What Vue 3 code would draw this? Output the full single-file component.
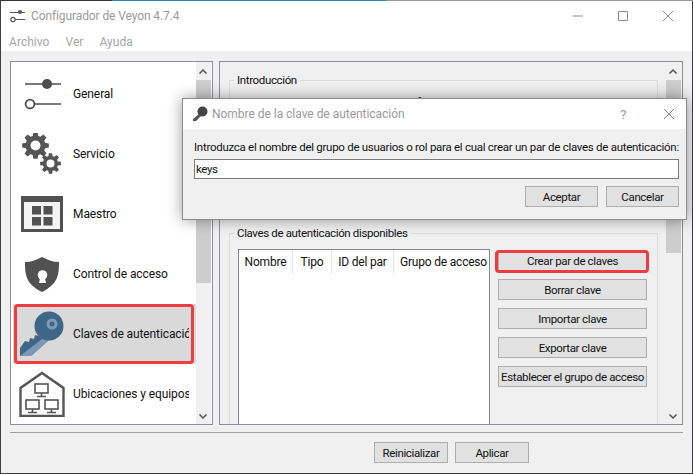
<template>
  <div class="screen">
    <div class="desktop-strip">
      <span class="strip-dark"></span>
      <span class="strip-blue"></span>
      <span class="strip-grey"></span>
    </div>
    <div class="window">
      <header class="titlebar">
        <svg class="app-icon" viewBox="0 0 16 14">
          <path d="M0 3.5h15M5 10.5h10" stroke="#555" stroke-width="1.2" fill="none" />
          <circle cx="10" cy="3" r="2" fill="#555" />
          <circle cx="3" cy="10.5" r="2.2" fill="#fff" stroke="#555" stroke-width="1.2" />
        </svg>
        <span class="title-text">Configurador de Veyon 4.7.4</span>
        <div class="win-controls">
          <svg viewBox="0 0 10 10"><path d="M0 5h10" /></svg>
          <svg viewBox="0 0 10 10"><path d="M.5.5h9v9h-9z" /></svg>
          <svg viewBox="0 0 10 10"><path d="M0 0l10 10M10 0L0 10" /></svg>
        </div>
      </header>
      <nav class="menubar">
        <span v-for="m in menus" :key="m">{{ m }}</span>
      </nav>

      <main class="content">
        <aside class="side-panel">
          <ul class="page-list">
            <li v-for="p in pages" :key="p.name" class="page-row" :class="{ active: p.active }">
              <div class="page-icon">
                <svg v-if="p.icon === 'general'" viewBox="0 0 42 42" width="42" height="42">
                  <path d="M4 11h36M13 31h27" stroke="#4d4d4d" stroke-width="1.6" fill="none" />
                  <circle cx="26" cy="11" r="5" fill="#4d4d4d" />
                  <circle cx="9" cy="31" r="4.4" fill="#fff" stroke="#4d4d4d" stroke-width="1.8" />
                </svg>
                <svg v-else-if="p.icon === 'service'" viewBox="0 0 42 42" width="42" height="42">
                  <path :d="bigGear" fill="#555" fill-rule="evenodd" />
                  <path :d="smallGear" fill="#555" fill-rule="evenodd" />
                </svg>
                <svg v-else-if="p.icon === 'master'" viewBox="0 0 42 36" width="42" height="36">
                  <rect x="1.5" y="1.5" width="39" height="33" fill="#f4f4f4" stroke="#515151" stroke-width="3" />
                  <rect x="1" y="1" width="40" height="5" fill="#515151" />
                  <rect x="11" y="10" width="9" height="8.5" fill="#515151" />
                  <rect x="22.5" y="10" width="9" height="8.5" fill="#515151" />
                  <rect x="11" y="21" width="9" height="8.5" fill="#515151" />
                  <rect x="22.5" y="21" width="9" height="8.5" fill="#515151" />
                </svg>
                <svg v-else-if="p.icon === 'access'" viewBox="0 0 42 42" width="42" height="42">
                  <path d="M21 4C27 7 32 9 38 9c0 13-1 22-17 30C5 31 4 22 4 9c6 0 11-2 17-5z" fill="#515151" />
                  <circle cx="21.5" cy="22" r="4.8" fill="#fff" />
                  <path d="M19.5 23l-1.5 7h7l-1.500-7z" fill="#fff" />
                </svg>
                <svg v-else-if="p.icon === 'keys'" viewBox="0 0 46 46" width="46" height="46">
                  <path d="M1 45V37l5-7 4 1 1-4 4 1 1-4 4 1 4-3 6 7-18 16z" fill="#3f6587" />
                  <path d="M1 45h11l18-16-3-4z" fill="#7b99b4" />
                  <circle cx="30" cy="15" r="14.500" fill="#3f6587" />
                  <circle cx="33" cy="13" r="5.500" fill="#7e9cb6" />
                  <circle cx="33" cy="13" r="2.500" fill="#3f6587" />
                </svg>
                <svg v-else viewBox="0 0 46 46" width="46" height="46" fill="none" stroke="#555" stroke-width="1.6">
                  <path d="M23 2L1.500 17v28h43V17z" stroke-width="2.400" />
                  <rect x="16" y="13" width="13" height="9" />
                  <path d="M22.500 22v3M18 25.500h9" />
                  <rect x="7" y="29" width="13" height="9" />
                  <path d="M13.500 38v3M9 41.500h9" />
                  <rect x="26" y="29" width="13" height="9" />
                  <path d="M32.500 38v3M28 41.500h9" />
                </svg>
              </div>
              <span class="page-label">{{ p.name }}</span>
            </li>
          </ul>
          <div class="scrollbar list-scroll">
            <svg class="arrow" viewBox="0 0 8 5"><path d="M.5 4.500L4 1l3.500 3.500" /></svg>
            <div class="thumb"></div>
            <svg class="arrow bottom" viewBox="0 0 8 5"><path d="M.5.5L4 4 7.500.5" /></svg>
          </div>
        </aside>

        <section class="main-panel">
          <div class="pane">
            <fieldset class="group intro">
              <legend>Introducción</legend>
              <p>Realice los siguientes pasos para configurar la autenticación de archivos de clave</p>
            </fieldset>
            <fieldset class="group keys">
              <legend>Claves de autenticación disponibles</legend>
              <div class="keys-layout">
                <div class="key-table">
                  <div class="table-head">
                    <span v-for="c in columns" :key="c.label" :style="{ width: c.width + 'px' }">{{ c.label }}</span>
                  </div>
                </div>
                <div class="key-actions">
                  <button v-for="b in keyButtons" :key="b.label" class="btn" :class="{ marked: b.marked }">{{ b.label }}</button>
                </div>
              </div>
            </fieldset>
          </div>
          <div class="scrollbar pane-scroll">
            <svg class="arrow" viewBox="0 0 8 5"><path d="M.5 4.500L4 1l3.500 3.500" /></svg>
            <div class="thumb"></div>
            <svg class="arrow bottom" viewBox="0 0 8 5"><path d="M.5.5L4 4 7.500.5" /></svg>
          </div>
        </section>
      </main>

      <div class="divider"></div>
      <footer class="footer">
        <button class="btn footer-btn">Reinicializar</button>
        <button class="btn footer-btn">Aplicar</button>
      </footer>

      <div class="dialog">
        <div class="dialog-title">
          <svg class="dialog-key" viewBox="0 0 16 16">
            <path d="M7 8L1 13v2h3l6-6z" fill="#555" />
            <circle cx="10.500" cy="5.500" r="5" fill="#444" />
          </svg>
          <span class="dialog-caption">Nombre de la clave de autenticación</span>
          <span class="dialog-help">?</span>
          <svg class="dialog-close" viewBox="0 0 10 10"><path d="M0 0l10 10M10 0L0 10" /></svg>
        </div>
        <div class="dialog-body">
          <label class="dialog-label">Introduzca el nombre del grupo de usuarios o rol para el cual crear un par de claves de autenticación:</label>
          <div class="dialog-input">keys</div>
          <div class="dialog-actions">
            <button class="btn dialog-btn">Aceptar</button>
            <button class="btn dialog-btn">Cancelar</button>
          </div>
        </div>
      </div>
    </div>
  </div>
</template>

<script setup>
const menus = ['Archivo', 'Ver', 'Ayuda']

const pages = [
  { name: 'General', icon: 'general' },
  { name: 'Servicio', icon: 'service' },
  { name: 'Maestro', icon: 'master' },
  { name: 'Control de acceso', icon: 'access' },
  { name: 'Claves de autenticación', icon: 'keys', active: true },
  { name: 'Ubicaciones y equipos', icon: 'house' }
]

const columns = [
  { label: 'Nombre', width: 54 },
  { label: 'Tipo', width: 39 },
  { label: 'ID del par', width: 62 },
  { label: 'Grupo de acceso', width: 95 }
]

const keyButtons = [
  { label: 'Crear par de claves', marked: true },
  { label: 'Borrar clave' },
  { label: 'Importar clave' },
  { label: 'Exportar clave' },
  { label: 'Establecer el grupo de acceso' }
]

// cog outline plus a round hole, teeth are simple trapezoids
function gear(cx, cy, outer, inner, hole, teeth) {
  const pts = []
  const step = (Math.PI * 2) / teeth
  for (let i = 0; i < teeth; i++) {
    const a = i * step
    const at = (r, o) => `${(cx + r * Math.cos(a + o)).toFixed(2)} ${(cy + r * Math.sin(a + o)).toFixed(2)}`
    pts.push(at(inner, -step * 0.36), at(outer, -step * 0.2), at(outer, step * 0.2), at(inner, step * 0.36))
  }
  return `M${pts.join('L')}Z M${cx - hole} ${cy}a${hole} ${hole} 0 1 0 ${hole * 2} 0a${hole} ${hole} 0 1 0 ${-hole * 2} 0Z`
}

const bigGear = gear(14.5, 12.5, 13.5, 10, 5, 8)
const smallGear = gear(29.5, 30.5, 10.5, 7.6, 4, 8)
</script>

<style>
html,
body {
  margin: 0;
  background: #f0f0f0;
  overflow: hidden;
}
</style>

<style scoped>
.screen {
  width: 693px;
  height: 474px;
  display: flex;
  flex-direction: column;
  background: #3a3f44;
  font-family: Roboto, "Open Sans", sans-serif;
  font-size: 11.5px;
  letter-spacing: -0.36px;
  color: #111;
}

.desktop-strip {
  display: flex;
  height: 1px;
  flex: none;
}
.strip-dark { width: 112px; background: #3a3434; }
.strip-blue { width: 274px; background: #2a86ab; }
.strip-grey { flex: 1; background: #9a9a96; }

.window {
  position: relative;
  flex: 1;
  margin: 0 1px 1px 1px;
  display: flex;
  flex-direction: column;
  background: #f0f0f0;
  min-height: 0;
}

.titlebar {
  height: 29px;
  flex: none;
  display: flex;
  align-items: center;
  background: #fff;
  padding-left: 9px;
}
.app-icon { width: 16px; height: 14px; margin-right: 5px; }
.title-text { color: #9a9a9a; font-size: 12px; letter-spacing: -0.1px; }

.win-controls {
  margin-left: auto;
  display: flex;
  gap: 35px;
  padding-right: 19px;
}
.win-controls svg { width: 10px; height: 10px; }
.win-controls path { stroke: #8c8c8c; fill: none; stroke-width: 1; }

.menubar {
  height: 21px;
  box-sizing: border-box;
  flex: none;
  background: #fff;
  display: flex;
  gap: 16px;
  padding: 2px 0 0 8px;
  align-items: center;
  color: #a6a6a6;
  font-size: 12px;
  letter-spacing: 0.05px;
}

.content {
  height: 364px;
  flex: none;
  margin-top: 10px;
  padding: 0 9px;
  display: flex;
  gap: 6px;
}

.side-panel,
.main-panel {
  position: relative;
  display: flex;
  border: 1px solid #8b8f96;
  box-sizing: border-box;
  overflow: hidden;
}
.side-panel { width: 203px; background: #fff; padding-left: 2px; }
.main-panel { flex: 1; background: #f0f0f0; }

.page-list {
  list-style: none;
  margin: 0;
  padding: 2px 0 0;
  width: 183px;
  flex: none;
}
.page-row {
  position: relative;
  height: 60px;
  display: flex;
  align-items: center;
  padding-left: 6px;
}
.page-row.active { background: #d9d9d9; }
.page-row.active::after {
  content: "";
  position: absolute;
  inset: 0 2px 0 1px;
  border: 3px solid #ee3c42;
  border-radius: 4px;
}
.page-icon {
  width: 46px;
  height: 46px;
  margin-right: 8px;
  display: flex;
  align-items: center;
  justify-content: center;
  flex: none;
}
.page-label {
  flex: 1;
  min-width: 0;
  white-space: nowrap;
  overflow: hidden;
  margin-right: 7px;
  font-size: 12px;
  letter-spacing: -0.1px;
}

.scrollbar {
  position: relative;
  width: 15px;
  flex: none;
  background: #f0f0f0;
}
.pane-scroll { margin: 0 1px 0 0; }
.thumb {
  position: absolute;
  left: 0;
  right: 0;
  background: #cdcdcd;
}
.list-scroll .thumb { top: 18px; height: 203px; }
.pane-scroll .thumb { top: 18px; height: 173px; }
.arrow {
  position: absolute;
  top: 7px;
  left: 3px;
  width: 8px;
  height: 5px;
}
.arrow.bottom { top: auto; bottom: 5px; }
.arrow path { fill: none; stroke: #555; stroke-width: 1.5; }

.pane {
  flex: 1;
  min-width: 0;
  padding: 11px 8px 0 9px;
  overflow: hidden;
}

.group {
  margin: 0;
  padding: 0 8px;
  border: 1px solid #dcdcdc;
  box-sizing: border-box;
}
.group legend {
  padding: 0 3px;
  margin-left: -4px;
}
.group.intro { height: 144px; margin-bottom: 9px; }
.group.intro p { margin: 8px 0 0; white-space: nowrap; }
.group.keys { height: 240px; }

.keys-layout {
  display: flex;
  gap: 8px;
  margin-top: 9px;
}
.key-table {
  width: 252px;
  height: 200px;
  flex: none;
  box-sizing: border-box;
  background: #fff;
  border: 1px solid #828790;
}
.table-head {
  display: flex;
  height: 24px;
  font-size: 12px;
  letter-spacing: -0.2px;
}
.table-head span {
  flex: none;
  box-sizing: border-box;
  text-align: center;
  line-height: 25px;
  border-right: 1px solid #e5e5e5;
  white-space: nowrap;
}
.table-head span:last-child { border-right: 0; text-align: left; padding-left: 6px; }

.key-actions {
  display: flex;
  flex-direction: column;
  gap: 8px;
  width: 149px;
  flex: none;
  padding-top: 1px;
}

.btn {
  position: relative;
  height: 21px;
  padding: 0;
  box-sizing: border-box;
  background: #e1e1e1;
  border: 1px solid #adadad;
  font: inherit;
  letter-spacing: inherit;
  color: #111;
  white-space: nowrap;
}
.btn.marked::after {
  content: "";
  position: absolute;
  inset: -1px -3px -3px -4px;
  border: 3px solid #ee3c42;
  border-radius: 4px;
}

.divider {
  height: 1px;
  flex: none;
  margin: 7px 9px 0;
  background: #a0a0a0;
}
.footer {
  flex: 1;
  display: flex;
  gap: 7px;
  padding: 9px 0 0 373px;
}
.footer-btn { width: 74px; }

.dialog {
  position: absolute;
  left: 181px;
  top: 97px;
  width: 505px;
  height: 122px;
  box-sizing: border-box;
  background: #f0f0f0;
  border: 1px solid #8c8c8c;
  box-shadow: 0 0 14px rgba(0, 0, 0, 0.4);
  display: flex;
  flex-direction: column;
}
.dialog-title {
  height: 30px;
  flex: none;
  background: #fff;
  display: flex;
  align-items: center;
  padding-left: 9px;
}
.dialog-key { width: 16px; height: 16px; margin-right: 4px; }
.dialog-caption { color: #9a9a9a; font-size: 12px; letter-spacing: -0.03px; }
.dialog-help {
  margin-left: auto;
  margin-right: 38px;
  color: #9a9a9a;
  font-size: 13px;
}
.dialog-close {
  width: 10px;
  height: 10px;
  margin-right: 12px;
}
.dialog-close path { stroke: #8c8c8c; fill: none; stroke-width: 1; }

.dialog-body {
  flex: 1;
  padding: 10px 7px 0 11px;
  display: flex;
  flex-direction: column;
}
.dialog-label { white-space: nowrap; line-height: 17px; letter-spacing: -0.28px; }
.dialog-input {
  margin-top: 3px;
  height: 20px;
  box-sizing: border-box;
  background: #fff;
  border: 1px solid #7a7a7a;
  padding-left: 1px;
  line-height: 18px;
}
.dialog-actions {
  display: flex;
  justify-content: flex-end;
  gap: 8px;
  margin-top: 7px;
}
.dialog-btn { width: 73px; }
</style>
